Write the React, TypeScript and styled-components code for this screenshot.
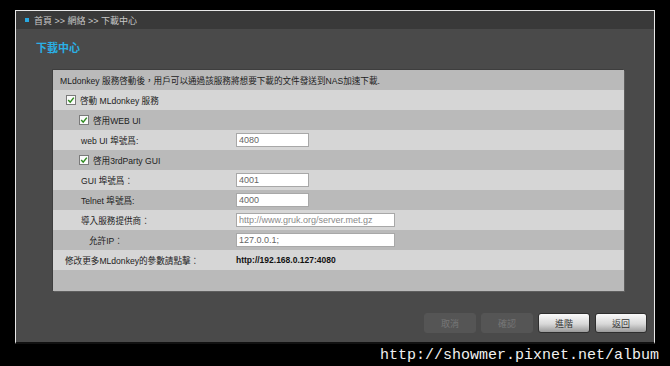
import React, { FC } from "react";
import styled, { createGlobalStyle } from "styled-components";

const GlobalStyle = createGlobalStyle`
  html, body {
    margin: 0;
    padding: 0;
    background: #000;
  }
  body {
    font-family: "Liberation Sans", "Noto Sans CJK TC", sans-serif;
    width: 670px;
    height: 366px;
    overflow: hidden;
  }
`;

type Shade = "dark" | "light";

const Check: FC<{ checked?: boolean }> = ({ checked = true }) => (
  <Box>
    {checked && (
      <svg width="8" height="8" viewBox="0 0 8 8">
        <path d="M1.2 4 L3.2 6.2 L6.8 1.6" fill="none" stroke="#2e8a1e" strokeWidth="1.5" />
      </svg>
    )}
  </Box>
);

const App: FC = () => {
  return (
    <>
      <GlobalStyle />
      <Page>
        <Frame>
          <TopBar>
            <Bullet />
            <Crumbs>首頁 &gt;&gt; 網絡 &gt;&gt; 下載中心</Crumbs>
          </TopBar>
          <Content>
            <Title>下載中心</Title>
            <Panel>
              <Row shade="dark">
                <Label indent={7}>
                  MLdonkey 服務啓動後，用戶可以通過該服務將想要下載的文件發送到NAS加速下載.
                </Label>
              </Row>
              <Row shade="light">
                <Label indent={13}>
                  <Check />
                  啓動 MLdonkey 服務
                </Label>
              </Row>
              <Row shade="dark">
                <Label indent={26}>
                  <Check />
                  啓用WEB UI
                </Label>
              </Row>
              <Row shade="light">
                <Label indent={28} fixed>web UI 埠號爲:</Label>
                <Input value="4080" readOnly w={73} />
              </Row>
              <Row shade="dark">
                <Label indent={26}>
                  <Check />
                  啓用3rdParty GUI
                </Label>
              </Row>
              <Row shade="light">
                <Label indent={28} fixed>GUI 埠號爲：</Label>
                <Input value="4001" readOnly w={73} />
              </Row>
              <Row shade="dark">
                <Label indent={28} fixed>Telnet 埠號爲:</Label>
                <Input value="4000" readOnly w={73} />
              </Row>
              <Row shade="light">
                <Label indent={28} fixed>導入服務提供商：</Label>
                <Input value="http://www.gruk.org/server.met.gz" readOnly w={159} muted />
              </Row>
              <Row shade="dark">
                <Label indent={36} fixed>允許IP：</Label>
                <Input value="127.0.0.1;" readOnly w={159} />
              </Row>
              <Row shade="light">
                <Label indent={12} fixed>修改更多MLdonkey的參數請點擊：</Label>
                <Link>http://192.168.0.127:4080</Link>
              </Row>
              <Row shade="dark" tall />
            </Panel>
            <Buttons>
              <Button disabled>取消</Button>
              <Button disabled>確認</Button>
              <Button>進階</Button>
              <Button>返回</Button>
            </Buttons>
          </Content>
        </Frame>
        <Watermark>http://showmer.pixnet.net/album</Watermark>
      </Page>
    </>
  );
};

export default App;

const Page = styled.div`
  display: flex;
  flex-direction: column;
  padding: 10px 0 0 15px;
`;

const Frame = styled.div`
  width: 638px;
  height: 331px;
  border: 1px solid #e8e8e8;
  border-bottom: 2px solid #111;
  background: #4a4a4a;
  display: flex;
  flex-direction: column;
`;

const TopBar = styled.div`
  height: 18px;
  background: #393939;
  display: flex;
  align-items: center;
  padding-left: 9px;
  gap: 5px;
`;

const Bullet = styled.span`
  width: 4px;
  height: 4px;
  background: #28a8e0;
`;

const Crumbs = styled.span`
  font-size: 9px;
  color: #c8c8c8;
`;

const Content = styled.div`
  display: flex;
  flex-direction: column;
  padding: 0 0 0 37px;
`;

const Title = styled.div`
  height: 41px;
  display: flex;
  align-items: center;
  padding: 0 0 6px 0;
  margin-left: -17px;
  color: #2ab0e6;
  font-size: 11px;
  font-weight: bold;
  box-sizing: border-box;
`;

const Panel = styled.div`
  width: 571px;
  display: flex;
  flex-direction: column;
  box-shadow: 1px 1px 0 #5e5e5e, -1px -1px 0 #3e3e3e;
`;

const Row = styled.div<{ shade: Shade; tall?: boolean }>`
  height: ${(p) => (p.tall ? 21 : 20)}px;
  display: flex;
  align-items: center;
  background: ${(p) => (p.shade === "dark" ? "#bababa" : "#d6d6d6")};
  font-size: 8.6px;
  color: #1c1c1c;
`;

const Label = styled.div<{ indent: number; fixed?: boolean }>`
  display: flex;
  align-items: center;
  gap: 4px;
  padding-left: ${(p) => p.indent}px;
  width: ${(p) => (p.fixed ? `${183 - p.indent}px` : "auto")};
  white-space: nowrap;
`;

const Box = styled.span`
  width: 8px;
  height: 8px;
  border: 1px solid #7a7a7a;
  background: #fafafa;
  display: inline-flex;
  align-items: center;
  justify-content: center;
`;

const Input = styled.input<{ w: number; muted?: boolean }>`
  width: ${(p) => p.w}px;
  height: 14px;
  box-sizing: border-box;
  border: 1px solid #a8a8a8;
  background: #fff;
  padding: 0 2px;
  font-family: "Liberation Sans", sans-serif;
  font-size: 9px;
  color: ${(p) => (p.muted ? "#8a8a8a" : "#666")};
  outline: none;
`;

const Link = styled.span`
  font-weight: bold;
  font-size: 8.5px;
  color: #111;
`;

const Buttons = styled.div`
  display: flex;
  justify-content: flex-end;
  gap: 5px;
  margin-top: 22px;
  padding-right: 7px;
`;

const Button = styled.button`
  width: 52px;
  height: 20px;
  border-radius: 3px;
  font-family: "Liberation Sans", "Noto Sans CJK TC", sans-serif;
  font-size: 9px;
  padding: 0;
  border: 1px solid ${(p) => (p.disabled ? "#555" : "#2e2e2e")};
  background: ${(p) =>
    p.disabled ? "#555" : "linear-gradient(#fafafa, #d8d8d8 55%, #9a9a9a)"};
  color: ${(p) => (p.disabled ? "#777" : "#333")};
`;

const Watermark = styled.div`
  align-self: flex-end;
  margin-top: 3px;
  margin-right: 11px;
  font-family: "Liberation Mono", monospace;
  font-size: 15px;
  color: #f0f0f0;
`;
